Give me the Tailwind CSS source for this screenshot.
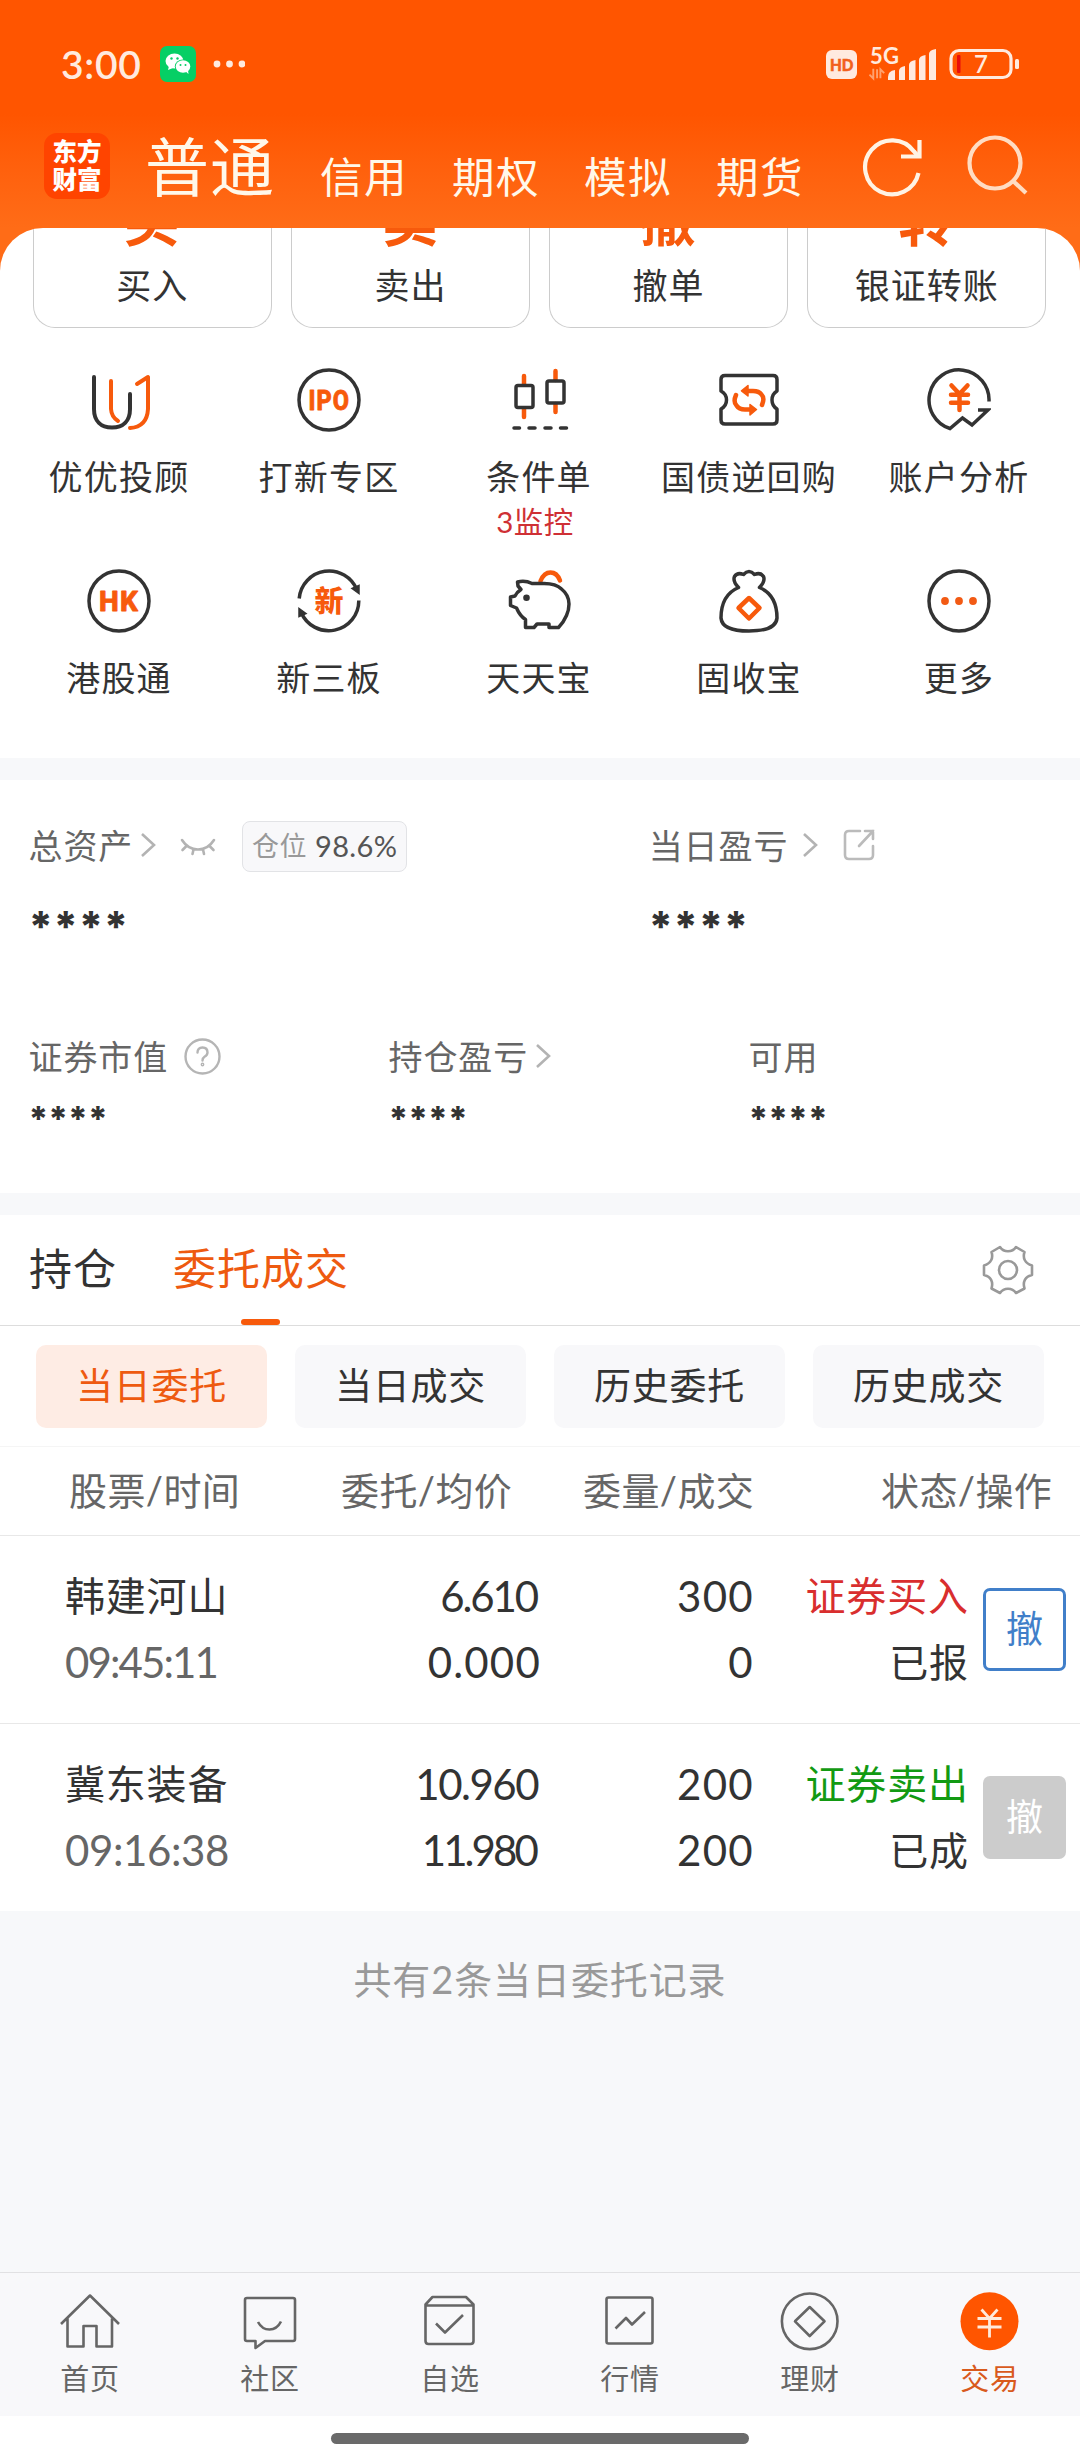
<!DOCTYPE html>
<html lang="zh-CN">
<head>
<meta charset="utf-8">
<title>交易</title>
<script src="https://cdn.jsdelivr.net/npm/@tailwindcss/browser@4"></script>
</head>
<body class="w-[1080px] h-[2460px] overflow-hidden bg-[#f7f8fa] text-[#333] font-['Lato','Noto_Sans_CJK_SC',sans-serif] whitespace-nowrap">
<!-- Header -->
<header class="h-[228px] bg-linear-to-b from-[#ff5500] from-50% to-[#ff6c17] text-[#fff8ea]">
  <div class="h-32 flex items-center pl-[61px] pr-[61px] text-[#ffeadf]">
    <span class="text-[39px] leading-[48px] w-[99px] tracking-[0.700px] font-semibold">3:00</span>
    <svg class="w-9 h-9" viewBox="0 0 36 36"><rect width="36" height="36" rx="7" fill="#06cf65"/><g fill="#fff"><ellipse cx="14.500" cy="15" rx="9" ry="7.500"/><path d="M9 20l-1 4 5-2z"/></g><ellipse cx="23" cy="20.500" rx="8.200" ry="7" fill="#06cf65"/><ellipse cx="23" cy="20.500" rx="7.300" ry="6.200" fill="#fff"/><path d="M25 25l3.500 3-.5-4z" fill="#fff"/><g fill="#06cf65"><circle cx="11.500" cy="12.500" r="1.200"/><circle cx="17.500" cy="12.500" r="1.200"/><circle cx="20.500" cy="19" r="1"/><circle cx="25.500" cy="19" r="1"/></g></svg>
    <svg class="w-8 h-2 ml-[17px]" viewBox="0 0 32 8" fill="#ffeadf"><circle cx="4" cy="4" r="3.400"/><circle cx="16.500" cy="4" r="3.400"/><circle cx="29" cy="4" r="3.400"/></svg>
    <svg class="ml-auto w-[31px] h-[29px]" viewBox="0 0 31 29"><rect width="31" height="29" rx="6" fill="#ffeadf"/><text x="4" y="20.500" font-family="Lato" font-size="16.500" font-weight="900" fill="#f2601c" stroke="#f2601c" stroke-width=".5" textLength="23.500" lengthAdjust="spacingAndGlyphs">HD</text></svg>
    <svg class="w-[68px] h-9 ml-3" viewBox="0 0 68 36"><text x="1" y="18" font-family="Lato" font-size="22" font-weight="700" fill="#ffeadf" textLength="29">5G</text><g fill="#ffeadf"><path d="M19 34v-3q0-6 7-7v10z"/><path d="M30 34V25q0-4 6-5v14zM40 34V19q0-4 6.500-5v20zM50 34V14q0-4 6.500-5v25zM60 34V8q0-4 7-5v31z"/></g><path d="M4.500 23v10l-4-4M8.500 33V23.500M12 33V23.500l4 4" fill="none" stroke="#ffa26f" stroke-width="2" transform="translate(0 1) scale(.95)"/></svg>
    <svg class="w-[70px] h-[32px] ml-3" viewBox="0 0 70 32"><rect x="2" y="2.500" width="60" height="27" rx="8" fill="none" stroke="#ffeadf" stroke-width="3.200"/><rect x="66" y="11" width="4" height="10" rx="1.500" fill="#ffeadf"/><rect x="8" y="7" width="3.500" height="18" rx="1" fill="#e80c0c"/><text x="25" y="25" font-family="Lato" font-size="24" font-weight="600" fill="#ffeadf">7</text></svg>
  </div>
  <nav class="h-[100px] flex items-start pl-11">
    <div class="mt-[5px] w-[66px] h-[66px] rounded-[13px] bg-[#ff4400] text-white text-[24.500px] leading-[28px] pt-[5px] font-black text-center">东方<br>财富</div>
    <span class="ml-[35px] mt-1.5 w-[142px] text-[64px] leading-[66px] tracking-[1px]">普通</span>
    <div class="mt-6 flex text-[42.500px] leading-[50px] tracking-[1.500px]">
      <span class="ml-[33px] w-[132px]">信用</span><span class="w-[132px]">期权</span><span class="w-[132px]">模拟</span><span class="w-[145px]">期货</span>
    </div>
    <svg class="mt-[6px] w-16 h-16" viewBox="0 0 64 64" fill="none" stroke="#fff3e4" stroke-width="4.200"><path d="M57.500 39A27 27 0 1 1 53 17.500L57 22"/><path d="M58.500 6V22.500H40"/></svg>
    <svg class="mt-[6px] ml-[41px] w-16 h-16" viewBox="0 0 64 64" fill="none" stroke="#ffdcc2" stroke-width="4.200"><circle cx="29" cy="29" r="25.500"/><path d="M46 46L60 59"/></svg>
  </nav>
</header>

<!-- Trading shortcuts -->
<div class="bg-[#ff6c17]">
<section class="h-[530px] bg-white rounded-t-[43px] overflow-hidden">
  <div class="h-[100px] pl-[33px] pr-[34px] grid grid-cols-4 gap-[19.500px] text-center text-[35px] leading-10 tracking-[1px]">
    <div class="border border-t-0 border-[#ccc] rounded-b-[22px] flex flex-col items-center"><div class="h-[20px] overflow-hidden flex items-end text-[56px] leading-[56px] font-bold text-[#f75a0c]">买</div><div class="mt-[17px]">买入</div></div>
    <div class="border border-t-0 border-[#ccc] rounded-b-[22px] flex flex-col items-center"><div class="h-[20px] overflow-hidden flex items-end text-[56px] leading-[56px] font-bold text-[#f75a0c]">卖</div><div class="mt-[17px]">卖出</div></div>
    <div class="border border-t-0 border-[#ccc] rounded-b-[22px] flex flex-col items-center"><div class="h-[20px] overflow-hidden flex items-end text-[56px] leading-[56px] font-bold text-[#f75a0c]">撤</div><div class="mt-[17px]">撤单</div></div>
    <div class="border border-t-0 border-[#ccc] rounded-b-[22px] flex flex-col items-center"><div class="h-[20px] overflow-hidden flex items-end text-[56px] leading-[56px] font-bold text-[#f75a0c]">转</div><div class="mt-[17px]">银证转账</div></div>
  </div>
  <div class="mt-10 pl-[14px] pr-[16px] grid grid-cols-5 auto-rows-[201px] text-[34px] leading-10 tracking-[1.200px]">
    <div class="flex flex-col items-center"><svg class="w-16 h-16 mb-[25px]" viewBox="0 0 64 64" fill="none" stroke-width="4" stroke-linecap="round" stroke-linejoin="round"><path d="M7 9V41C7 53 14 59.500 25 59.500S43 53 43 41V26" stroke="#333"/><path d="M24 13V41Q24.500 49 31 53M50 16L61 9V41Q60 59 43 60" stroke="#f75a0c"/></svg>优优投顾</div>
    <div class="flex flex-col items-center"><svg class="w-16 h-16 mb-[25px]" viewBox="0 0 64 64"><circle cx="32" cy="32" r="30" fill="none" stroke="#333" stroke-width="3.500"/><text x="11.500" y="42" font-family="Roboto" font-size="28" font-weight="800" fill="#f75a0c" stroke="#f75a0c" stroke-width=".8" stroke-linejoin="round" textLength="41.500" lengthAdjust="spacingAndGlyphs">IPO</text></svg>打新专区</div>
    <div class="flex flex-col items-center"><svg class="w-16 h-16 mb-[25px]" viewBox="0 0 64 64" fill="none" stroke-width="3.500" stroke-linecap="round" stroke-linejoin="round"><path d="M17 8V16M17 41V49M48.500 3V12M48.500 36V44" stroke="#f75a0c" stroke-width="4.500"/><g stroke="#333"><rect x="9" y="17.500" width="17" height="22" rx="2"/><rect x="40" y="13" width="17" height="22" rx="2"/><path d="M7 60h5.500M22 60h6M38 60h6M53.500 60h6"/></g></svg>条件单<span class="mt-2.5 mr-2 text-[29.500px] leading-[30px] tracking-[0.500px] text-[#cf3035]">3监控</span></div>
    <div class="flex flex-col items-center"><svg class="w-16 h-16 mb-[25px]" viewBox="0 0 64 64" fill="none" stroke-width="3.500" stroke-linecap="round" stroke-linejoin="round"><path d="M8 7.500H56Q60 7.500 60 11.500V23Q55 26 55 32T60 41V52Q60 56 56 56H8Q4 56 4 52V41Q9.500 38 9.500 32T4 23V11.500Q4 7.500 8 7.500Z" stroke="#333"/><g stroke="#f75a0c" stroke-width="4.500"><path d="M45 37Q48 30 44.500 26.500Q42 23 36 23H30M19 27Q16 34 19.500 37.500Q22 41.500 28 41.500H34"/><path d="M31 17.500V28L24.500 22.800ZM33 36.500V47L39.500 41.500Z" fill="#f75a0c" stroke-width="1.500"/></g></svg>国债逆回购</div>
    <div class="flex flex-col items-center"><svg class="w-16 h-16 mb-[25px]" viewBox="0 0 64 64" fill="none" stroke-width="3.500"><path d="M62 33.500A30 30 0 1 0 23 60.500L35.500 50L45 57L61 42H51" stroke="#333"/><path d="M24.500 17.500L32.500 26L40.500 17.500M24 26.800H41M24 34.800H41M32.500 26V42" stroke="#f75a0c" stroke-width="4.500" stroke-linecap="round"/></svg>账户分析</div>
    <div class="flex flex-col items-center"><svg class="w-16 h-16 mb-[25px]" viewBox="0 0 64 64"><circle cx="32" cy="32" r="30" fill="none" stroke="#333" stroke-width="3.500"/><text x="12" y="42" font-family="Roboto" font-size="28" font-weight="800" fill="#f75a0c" stroke="#f75a0c" stroke-width=".8" stroke-linejoin="round" textLength="40" lengthAdjust="spacingAndGlyphs">HK</text></svg>港股通</div>
    <div class="flex flex-col items-center"><svg class="w-16 h-16 mb-[25px]" viewBox="0 0 64 64" fill="none" stroke="#333" stroke-width="3.500"><path d="M2.200 29.500A30 30 0 0 1 60 21M61.800 31.500A30 30 0 0 1 4 43"/><path d="M55 19.500L62 16.500V24.500ZM9 44.500L2 47.500V39.500Z" fill="#333" stroke-width="1.500"/><text x="17.500" y="42.500" font-family="Noto Sans CJK SC" font-size="29" font-weight="900" fill="#f75a0c" stroke="none">新</text></svg>新三板</div>
    <div class="flex flex-col items-center"><svg class="w-16 h-16 mb-[25px]" viewBox="0 0 64 64" fill="none" stroke-width="3.500" stroke-linecap="round" stroke-linejoin="round"><path d="M33.500 12Q37 3.500 43.500 3.500T53 11.500" stroke="#f75a0c" stroke-width="4.500"/><path d="M11 17L10.500 13Q18 11 25 14.500H37Q49 14.500 54.500 20Q62 26 62 35Q62 41 59.500 46.500Q56.500 53.500 51.500 58.500H42V55H30L27 58.500H18.500V50.500Q13 47 9.500 39L3.500 36.500V28L8 27Q10 23 14 20.500Z" stroke="#333"/><circle cx="19.500" cy="28.700" r="3.300" fill="#333"/></svg>天天宝</div>
    <div class="flex flex-col items-center"><svg class="w-16 h-16 mb-[25px]" viewBox="0 0 64 64" fill="none" stroke-width="3.500" stroke-linecap="round" stroke-linejoin="round"><path d="M21.500 18.500Q15.500 12 17.500 7.500Q20.500 3 26.500 5.500Q32 -.5 37.500 5.500Q43.500 3 46.500 7.500Q48.500 12 42.500 18.500Q60 26 60 49Q59 62 32 62T4 49Q4 26 21.500 18.500" stroke="#333"/><path d="M32 29L42.500 39L32 49.500L21.500 39Z" stroke="#f75a0c" stroke-width="4.500"/></svg>固收宝</div>
    <div class="flex flex-col items-center"><svg class="w-16 h-16 mb-[25px]" viewBox="0 0 64 64"><circle cx="32" cy="32" r="30" fill="none" stroke="#333" stroke-width="3.500"/><g fill="#f25a14"><circle cx="18" cy="32" r="3.900"/><circle cx="32" cy="32" r="3.900"/><circle cx="46" cy="32" r="3.900"/></g></svg>更多</div>
  </div>
</section>
</div>

<!-- Assets -->
<section class="mt-[22px] h-[413px] bg-white pl-[28.500px] pt-10 text-[34px] tracking-[0.900px] text-[#666]">
  <div class="h-[50px] flex items-center">
    <span>总资产</span>
    <svg class="ml-[7px] w-4 h-[26px]" viewBox="0 0 16 26" fill="none" stroke="#b3b3b3" stroke-width="2.600"><path d="M2 2L14 13L2 24"/></svg>
    <svg class="ml-[24px] mt-1 w-[36px] h-[20px]" viewBox="0 0 36 20" fill="none" stroke="#b3b3b3" stroke-width="2.600" stroke-linecap="round"><path d="M2 3Q8 12.500 18 12.500T34 3M6 9.500L2.500 13M30 9.500L33.500 13M13.500 12.500L12.500 17M23 12.500L24 17"/></svg>
    <div class="ml-[26px] mt-0.5 w-[165px] h-[51px] rounded-[8px] border border-[#e2e3e6] bg-[#f8f8fa] flex items-center justify-center text-[27px] tracking-[0.500px] text-[#999]">仓位<span class="ml-2 text-[29px] tracking-[0.400px] text-[#555]">98.6%</span></div>
    <span class="ml-[241.500px]">当日盈亏</span>
    <svg class="ml-[14px] w-4 h-[26px]" viewBox="0 0 16 26" fill="none" stroke="#b3b3b3" stroke-width="2.600"><path d="M2 2L14 13L2 24"/></svg>
    <svg class="ml-[25px] w-8 h-8" viewBox="0 0 32 32" fill="none" stroke="#bbb" stroke-width="2.600" stroke-linecap="round"><path d="M17 2H6Q2 2 2 6V26Q2 30 6 30H26Q30 30 30 26V17M22 2H30V10M30 2L16 17"/></svg>
  </div>
  <div class="mt-[26px] h-10 flex text-[42px] leading-[61px] font-extrabold text-[#333] font-['Inter'] tracking-[0.600px]"><span class="w-[620px]">****</span><span>****</span></div>
  <div class="mt-[96px] h-[48px] flex items-center">
    <div class="w-[360px] flex items-center">证券市值<svg class="ml-[16px] w-[37px] h-[37px]" viewBox="0 0 37 37" fill="none" stroke="#b5b5b5" stroke-width="2.400" stroke-linecap="round"><circle cx="18.500" cy="18.500" r="17"/><path d="M13.500 14.500Q13.500 9.500 18.500 9.500T23.500 14.500Q23.500 17 20.500 18.700Q18.500 20 18.500 22.500"/><circle cx="18.500" cy="26.500" r=".7"/></svg></div>
    <div class="w-[360px] flex items-center">持仓盈亏<svg class="ml-[7px] w-4 h-[26px]" viewBox="0 0 16 26" fill="none" stroke="#b3b3b3" stroke-width="2.600"><path d="M2 2L14 13L2 24"/></svg></div>
    <div>可用</div>
  </div>
  <div class="mt-[16px] h-8 flex text-[34px] leading-[46px] font-extrabold text-[#333] font-['Inter']"><span class="w-[360px] tracking-normal">****</span><span class="w-[360px] tracking-normal">****</span><span class="tracking-normal">****</span></div>
</section>

<!-- Orders -->
<section class="mt-[22px] bg-white">
  <div class="relative h-[111px] pl-[29px] pr-[46px] flex items-center border-b border-[#ddd] text-[43px] tracking-[1px]">
    <span class="w-[144px] -mt-0.5">持仓</span><span class="-mt-0.5 text-[#ee5a10]">委托成交</span>
    <div class="absolute left-[241px] bottom-0 w-[39px] h-[6px] rounded-full bg-[#f75a0c]"></div>
    <svg class="ml-auto w-[52px] h-[52px]" viewBox="0 0 52 52" fill="none" stroke="#999" stroke-width="2.600" stroke-linejoin="round"><path d="M18 3C20 6 22.500 7.300 26 7.300S32 6 34 3L42.500 8C40.500 14 43 19.500 50 21.500V31C43 32.500 40.500 38 42.500 44.500L34 49C32 46 29.500 44.700 26 44.700S20 46 18 49L9.500 44.500C11.500 38 9 32.500 2 31V21.500C9 19.500 11.500 14 9.500 8Z"/><circle cx="26" cy="26" r="9"/></svg>
  </div>
  <div class="h-[121px] px-9 flex items-center gap-7 border-b border-[#f5f5f5] text-[37px] tracking-[0.700px] text-center leading-[82px]">
    <div class="w-[231px] h-[83px] rounded-[10px] bg-[#feece4] text-[#ee5a10]">当日委托</div>
    <div class="w-[231px] h-[83px] rounded-[10px] bg-[#f8f8fa]">当日成交</div>
    <div class="w-[231px] h-[83px] rounded-[10px] bg-[#f8f8fa]">历史委托</div>
    <div class="w-[231px] h-[83px] rounded-[10px] bg-[#f8f8fa]">历史成交</div>
  </div>
  <div class="h-[89px] pl-[69px] flex items-center border-b border-[#e8e8e8] text-[38px] tracking-[0.400px] text-[#666] leading-[86px] pb-0.5">
    <span class="w-[272px]">股票/时间</span><span class="w-[242px]">委托/均价</span><span class="w-[298px]">委量/成交</span><span>状态/操作</span>
  </div>
  <div class="h-[188px] flex border-b border-[#e8e8e8] pt-[27px] text-[40px] leading-[66px]">
    <div class="pl-[65px] w-[265px] tracking-[0.800px]"><div>韩建河山</div><div class="text-[42px] text-[#666] tracking-[-1.900px]">09:45:11</div></div>
    <div class="w-[276px] text-right text-[42px]"><div class="pr-[4px] tracking-[-2.100px]">6.610</div><div class="tracking-[1.200px]">0.000</div></div>
    <div class="w-[213px] text-right text-[42px] tracking-[1.300px]"><div>300</div><div>0</div></div>
    <div class="w-[215px] text-right tracking-[0.900px]"><div class="text-[#d92e2e]">证券买入</div><div class="text-[39px]">已报</div></div>
    <div class="ml-[14px] mt-[25px] w-[83px] h-[83px] rounded-[7px] border-3 border-[#417fc9] text-[#417fc9] text-center text-[37px] leading-[76px]">撤</div>
  </div>
  <div class="h-[187px] flex pt-[27px] text-[40px] leading-[66px]">
    <div class="pl-[65px] w-[265px] tracking-[0.800px]"><div>冀东装备</div><div class="text-[42px] text-[#666] tracking-[-0.400px]">09:16:38</div></div>
    <div class="w-[276px] text-right text-[42px]"><div class="pr-[3px] tracking-[-1.500px]">10.960</div><div class="pr-[5px] tracking-[-2.900px]">11.980</div></div>
    <div class="w-[213px] text-right text-[42px] tracking-[1.300px]"><div>200</div><div>200</div></div>
    <div class="w-[215px] text-right tracking-[0.900px]"><div class="text-[#129a12]">证券卖出</div><div class="text-[39px]">已成</div></div>
    <div class="ml-[14px] mt-[25px] w-[83px] h-[83px] rounded-[7px] bg-[#ccc] text-white text-center text-[37px] leading-[82px]">撤</div>
  </div>
</section>
<div class="h-[361px] pt-[42px] text-center text-[38px] leading-[52px] text-[#999] tracking-[0.900px]">共有2条当日委托记录</div>

<!-- Bottom navigation -->
<footer class="h-[144px] bg-[#f8f8fa] border-t border-[#e1e1e3] pt-4 grid grid-cols-6 text-[29px] leading-9 text-[#666] tracking-[0.800px]">
  <div class="flex flex-col items-center"><svg class="w-16 h-16 mb-2" viewBox="0 0 64 64" fill="none" stroke="#666" stroke-width="2.600" stroke-linejoin="round"><path d="M3 35L32 6.500L61 35M9.500 29.500V57.500H25.500V37H38.500V57.500H54V29.500"/></svg>首页</div>
  <div class="flex flex-col items-center"><svg class="w-16 h-16 mb-2" viewBox="0 0 64 64" fill="none" stroke="#666" stroke-width="2.600" stroke-linejoin="round"><path d="M9 9H55Q57 9 57 11V50Q57 52 55 52H27L17.500 59V52H9Q7 52 7 50V11Q7 9 9 9Z"/><path d="M20 33Q24 40.500 31.500 40.500T43 32.500"/></svg>社区</div>
  <div class="flex flex-col items-center"><svg class="w-16 h-16 mb-2" viewBox="0 0 64 64" fill="none" stroke="#666" stroke-width="2.600" stroke-linejoin="round"><path d="M7.500 15.500L14.500 8H48L55.500 15.500V52Q55.500 55 52.500 55H10.500Q7.500 55 7.500 52ZM7.500 16.500H55.500M18 34.500L27 43.500L45 26"/></svg>自选</div>
  <div class="flex flex-col items-center"><svg class="w-16 h-16 mb-2" viewBox="0 0 64 64" fill="none" stroke="#666" stroke-width="2.600" stroke-linejoin="round"><rect x="8.500" y="8.500" width="46" height="46" rx="2"/><path d="M17.500 39.500L28 29L34 35.500L47 23"/></svg>行情</div>
  <div class="flex flex-col items-center"><svg class="w-16 h-16 mb-2" viewBox="0 0 64 64" fill="none" stroke="#666" stroke-width="2.600" stroke-linejoin="round"><circle cx="31.700" cy="32.300" r="27.800"/><path d="M31.700 18L46.500 32.300L31.700 47L17 32.300Z"/></svg>理财</div>
  <div class="flex flex-col items-center text-[#d95a1c]"><svg class="w-16 h-16 mb-2" viewBox="0 0 64 64" fill="none" stroke="#ffeadb" stroke-width="2.800"><circle cx="31.500" cy="32.300" r="29" fill="#ff5500" stroke="none"/><path d="M23.500 20.500L31.500 29.500L39.500 20.500M19.500 29.500H43.500M19.500 38H43.500M31.500 29V48.500"/></svg>交易</div>
</footer>
<div class="h-11 bg-white pt-[17px]"><div class="mx-auto w-[418px] h-[11px] rounded-full bg-[#6a6a6a]"></div></div>
</body>
</html>
